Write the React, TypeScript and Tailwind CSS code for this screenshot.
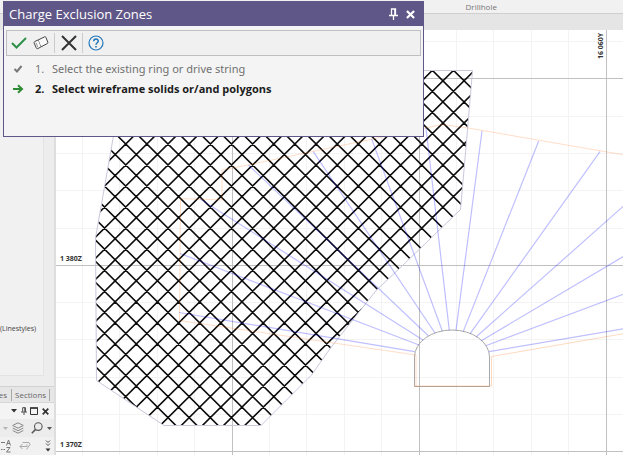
import React, { useState } from 'react'

type Point = [number, number]

interface ToolButtonProps {
  label: string
  className?: string
  onClick?: () => void
  children: React.ReactNode
}

// Design outline of the exclusion solid, in section coordinates
const ZONE: Point[] = [
  [125, 70.5], [472.5, 70.5], [467.5, 130], [460.5, 209.5], [399, 269],
  [376.5, 290], [330.5, 348], [311.5, 375], [261, 425.5], [164, 425.5],
  [96.5, 380.5], [95.5, 238],
]

// Drillholes as collar -> toe
const HOLES: [Point, Point][] = [
  [[414.7, 351.7], [179, 312.5]],
  [[419, 345], [180, 253.5]],
  [[423, 340], [200, 199]],
  [[428.3, 335.7], [248.5, 165]],
  [[435, 333], [313.3, 151.7]],
  [[442.3, 331], [371.7, 139]],
  [[449.3, 330.4], [426, 128]],
  [[456, 330.4], [482, 131]],
  [[463.3, 331.4], [538.7, 141]],
  [[470.3, 333.4], [600, 151.7]],
  [[476.3, 336.7], [660, 173.7]],
  [[481.3, 340.7], [690, 217]],
  [[485.7, 345.7], [700, 265.5]],
  [[489, 351.7], [720, 312.5]],
]

const HATCH_X = 21.15
const HATCH_Y = 21.05

const toPoints = (list: Point[]) => list.map(p => p.join(',')).join(' ')

const hatchLines = () => {
  const d: string[] = []
  for (let i = -20; i < 40; i++) {
    const x = 125.7 + i * HATCH_X
    d.push(`M${x - 8 * HATCH_X} ${144 - 8 * HATCH_Y}L${x + 16 * HATCH_X} ${144 + 16 * HATCH_Y}`)
    d.push(`M${x + 8 * HATCH_X} ${144 - 8 * HATCH_Y}L${x - 16 * HATCH_X} ${144 + 16 * HATCH_Y}`)
  }
  return d.join('')
}

const gridLines = (major: boolean) => {
  const d: string[] = []
  for (let i = 0; i < 60; i++) {
    if ((i % 5 === 4) === major) {
      d.push(`M${Math.round(82 + i * 37.4) + 0.5} 0V2000`)
    }
    if ((i % 5 === 1) === major) {
      d.push(`M0 ${Math.round(41 + i * 37.3) + 0.5}H3000`)
    }
  }
  return d.join('')
}

function SectionView() {
  return (
    <svg className="block h-full w-full" role="img" aria-label="Section view">
      <defs>
        <clipPath id="zone">
          <polygon points={toPoints(ZONE)} />
        </clipPath>
      </defs>
      <g transform="translate(-56 -30)" fill="none">
        <path d={gridLines(false)} stroke="#f3f3f3" />
        <path d={gridLines(true)} stroke="#c0c0c0" />

        <path d={hatchLines()} stroke="#0c0c0c" strokeWidth="1.6" clipPath="url(#zone)" />
        <polygon points={toPoints(ZONE)} stroke="#c9c8dc" />

        <path d="M414.5 386.5V357A37.5 27 0 0 1 489.5 357V386.5Z" stroke="#a9a9a9" />

        {/* Ring boundary */}
        <path
          d="M416 386.5V355L179.5 320.5L180.5 198.5L222 200V170L248 165L380 137.5L442.5 124.5L468 128L700 168"
          stroke="#ff7a20"
          strokeOpacity="0.25"
        />
        <path d="M414 386H491.5V356.5L720 317" stroke="#ff7a20" strokeOpacity="0.28" />

        {HOLES.map(([collar, toe], index) => (
          <line
            key={index}
            x1={collar[0]}
            y1={collar[1]}
            x2={toe[0]}
            y2={toe[1]}
            stroke="#0000ff"
            strokeOpacity="0.25"
            strokeWidth="1.2"
          />
        ))}

        <g fill="#333333" className="font-['Open_Sans',sans-serif] text-[7px] font-bold">
          <text x="60" y="261">1 380Z</text>
          <text x="60" y="447">1 370Z</text>
          <text transform="translate(603 59) rotate(-90)">16 060Y</text>
        </g>
      </g>
    </svg>
  )
}

function PinIcon({ className }: { className?: string }) {
  return (
    <svg viewBox="0 0 9 12" className={className} fill="none" stroke="currentColor" aria-hidden="true">
      <path d="M2.5 7V1H6.5V7M0 7.5H9M4.5 8V12" strokeWidth="1.3" />
      <path d="M6 1V7" strokeWidth="1.6" />
    </svg>
  )
}

function CloseIcon({ className }: { className?: string }) {
  return (
    <svg viewBox="0 0 10 10" className={className} fill="none" stroke="currentColor" strokeWidth="2.4" aria-hidden="true">
      <path d="M1 1L9 9M9 1L1 9" />
    </svg>
  )
}

function ToolButton({ label, className = '', onClick, children }: ToolButtonProps) {
  return (
    <button type="button" aria-label={label} onClick={onClick} className={`flex items-center justify-center ${className}`}>
      {children}
    </button>
  )
}

function ExclusionDialog({ onClose }: { onClose: () => void }) {
  return (
    <div
      role="dialog"
      aria-label="Charge Exclusion Zones"
      className="absolute left-[3px] top-px w-[421px] border border-[#5f5787] bg-[#f4f4f4] pb-[37px]"
    >
      <div className="flex h-6 items-center gap-px bg-[#5f5787] pl-[5px] pr-[5px] text-white">
        <h1 className="flex-1 text-[13px] leading-6">Charge Exclusion Zones</h1>
        <ToolButton label="Pin" className="h-4 w-4">
          <PinIcon className="h-3 w-[9px]" />
        </ToolButton>
        <ToolButton label="Close" className="h-4 w-4" onClick={onClose}>
          <CloseIcon className="h-[9px] w-[9px]" />
        </ToolButton>
      </div>

      <div className="mx-0.5 mt-1 flex h-[26px] items-center border border-[#bfbfbf] bg-[#f0f0f0] pl-1">
        <ToolButton label="Apply" className="h-5 w-4">
          <svg viewBox="0 0 16 12" className="h-3 w-4" fill="none" stroke="#2e9149" strokeWidth="2">
            <path d="M1 6L5.5 10.5L15 1" />
          </svg>
        </ToolButton>
        <ToolButton label="Clear" className="ml-1.5 h-5 w-4">
          <svg viewBox="0 0 16 14" className="h-[14px] w-4" fill="#fafafa" stroke="#444444" strokeWidth="1">
            <path d="M5 4L11.5 0.9C12.2 0.6 12.7 0.8 12.9 1.3L14.8 6.2C15 6.8 14.9 7.2 14.4 7.5L7.8 11L5 4Z" />
            <path d="M5 4L2 5.4C1.2 5.8 0.9 6.4 1.2 7.1L3.2 11.8C3.6 12.7 4.2 12.9 5 12.5L7.8 11" />
            <path d="M3 6.7L4.8 11.2" stroke="#999999" />
          </svg>
        </ToolButton>
        <div className="ml-[5px] h-5 w-px bg-[#cccccc]" />
        <ToolButton label="Cancel" className="ml-1.5 h-5 w-4">
          <svg viewBox="0 0 16 16" className="h-4 w-4" fill="none" stroke="#333333" strokeWidth="2">
            <path d="M1 1L15 15M15 1L1 15" />
          </svg>
        </ToolButton>
        <div className="ml-[5px] h-5 w-px bg-[#cccccc]" />
        <ToolButton label="Help" className="ml-[5px] h-5 w-4">
          <svg viewBox="0 0 16 16" className="h-4 w-4" fill="none" stroke="#2277bb">
            <circle cx="8" cy="8" r="7" strokeWidth="1.2" />
            <path d="M5.7 6.3C5.7 3.4 10.3 3.4 10.3 6.1C10.3 7.8 8 7.8 8 9.8" strokeWidth="1.5" />
            <path d="M8 11V12.6" strokeWidth="1.6" />
          </svg>
        </ToolButton>
      </div>

      <ol className="mt-[3px] text-[11px] leading-5">
        <li className="flex items-center pl-2 text-[#707070]">
          <svg viewBox="0 0 12 10" className="h-2.5 w-3" fill="none" stroke="#777777" strokeWidth="2">
            <path d="M2.5 5L5 7.5L9.5 2" />
          </svg>
          <span className="w-7 pl-[11px]">1.</span>
          <span className="font-['Noto_Sans',sans-serif]">Select the existing ring or drive string</span>
        </li>
        <li className="flex items-center pl-2 font-bold text-[#1c1c1c]">
          <svg viewBox="0 0 12 10" className="h-2.5 w-3" fill="none" stroke="#2f8a35" strokeWidth="2">
            <path d="M1 5H9.5M6 1.2L10 5L6 8.8" />
          </svg>
          <span className="w-7 pl-[11px]">2.</span>
          <span>Select wireframe solids or/and polygons</span>
        </li>
      </ol>
    </div>
  )
}

function SideDock() {
  return (
    <aside className="flex w-14 shrink-0 flex-col overflow-hidden border-r-2 border-[#dedede] bg-[#ededed] text-[8px] text-[#666666]">
      <div className="mb-2.5 mr-[10px] flex flex-1 items-end border-b border-r border-[#e3e3e3] bg-[#f1f1f1] pb-[38px]">
        <span className="text-[7px] leading-4 text-[#444444]">(Linestyles)</span>
      </div>
      <div className="flex h-4 items-center border-t border-[#d2d2d2] bg-[#e6e6e6] leading-4">
        <button type="button" className="w-3 overflow-hidden border-r border-[#aaaaaa] pr-1 text-right leading-3">
          <span className="float-right">es</span>
        </button>
        <button type="button" className="border-r border-[#aaaaaa] px-[3px] leading-3">Sections</button>
      </div>
      <div className="flex h-[17px] items-center justify-end gap-[3px] border-t border-[#d8d8d8] bg-[#f4f4f4] pr-[5px] text-[#333333]">
        <ToolButton label="Menu" className="h-3 w-2">
          <svg viewBox="0 0 6 4" className="h-1 w-1.5" fill="currentColor"><path d="M0 0H6L3 3.5Z" /></svg>
        </ToolButton>
        <ToolButton label="Pin panel" className="h-3 w-1.5">
          <PinIcon className="h-2 w-1.5" />
        </ToolButton>
        <ToolButton label="Maximize" className="h-3 w-2">
          <svg viewBox="0 0 8 8" className="h-2 w-2" fill="none" stroke="currentColor"><path d="M0.5 1H7.5V7.5H0.5Z" /><path d="M0 1H8" strokeWidth="1.5" /></svg>
        </ToolButton>
        <ToolButton label="Close panel" className="h-3 w-2">
          <CloseIcon className="h-[7px] w-[7px]" />
        </ToolButton>
      </div>
      <div className="flex h-[18px] items-center gap-1 bg-[#ececec] pl-[3px] text-[#666666]">
        <svg viewBox="0 0 5 3" className="h-[3px] w-[5px]" fill="#b5b5b5"><path d="M0 0H5L2.5 3Z" /></svg>
        <ToolButton label="Layers" className="h-4 w-3">
          <svg viewBox="0 0 12 12" className="h-3 w-3" fill="none" stroke="#888888">
            <path d="M6 0.8L11.3 3.5L6 6.2L0.7 3.5Z" />
            <path d="M0.7 6L6 8.7L11.3 6M0.7 8.5L6 11.2L11.3 8.5" />
          </svg>
        </ToolButton>
        <ToolButton label="Search" className="ml-[3px] h-4 w-3">
          <svg viewBox="0 0 12 12" className="h-3 w-3" fill="none" stroke="#555555" strokeWidth="1.1">
            <circle cx="7.3" cy="4.6" r="3.8" />
            <path d="M4.6 7.4L0.8 11.2" strokeWidth="1.5" />
          </svg>
        </ToolButton>
        <svg viewBox="0 0 5 3" className="h-[3px] w-[5px]" fill="#555555"><path d="M0 0H5L2.5 3Z" /></svg>
      </div>
      <div className="flex h-[18px] items-center bg-[#f1f1f1] pl-px">
        <ToolButton label="Sort" className="h-4 w-2.5">
          <svg viewBox="0 0 10 14" className="h-3.5 w-2.5" fill="none" stroke="#777777">
            <path d="M0 3.5H4M0 10.5H1.5M2.5 10.5H4M5.5 6.5L7.5 1L9.5 6.5M6.2 4.5H8.8M5.5 8.5H9L5.5 13H9.5" />
          </svg>
        </ToolButton>
        <ToolButton label="Undo" className="ml-2 h-4 w-3">
          <svg viewBox="0 0 12 10" className="h-2.5 w-3" fill="none" stroke="#aaaaaa">
            <path d="M3.5 1.5H10L11 3.5L7.5 8.5M1 5.5H8V3.5M3.5 3L1 5.5L3.5 8" />
          </svg>
        </ToolButton>
        <ToolButton label="More" className="ml-[13px] h-4 w-2">
          <svg viewBox="0 0 6 12" className="h-3 w-1.5" fill="none" stroke="#555555">
            <path d="M1 0.5L3 2.5L5 0.5M1 3.5L3 5.5L5 3.5" />
            <path d="M0.5 8.5H5.5L3 11.5Z" fill="#333333" stroke="none" />
          </svg>
        </ToolButton>
      </div>
    </aside>
  )
}

export default function App() {
  const [dialogOpen, setDialogOpen] = useState(true)

  return (
    <div className="relative flex h-screen flex-col overflow-hidden bg-white font-['Open_Sans','Noto_Sans',sans-serif]">
      <header className="grid shrink-0 grid-cols-[54.5%_45.5%] border-b border-[#cfcfcf] bg-[#f1f1f1]">
        <span className="col-start-2 pt-px text-center text-[8px] leading-3 text-[#777777]">Drillhole</span>
      </header>
      <div className="h-4 shrink-0 bg-[#e5e5e5]" />

      <div className="flex min-h-0 flex-1">
        <SideDock />
        <main className="min-w-0 flex-1 bg-white">
          <SectionView />
        </main>
      </div>

      {dialogOpen && <ExclusionDialog onClose={() => setDialogOpen(false)} />}
    </div>
  )
}
